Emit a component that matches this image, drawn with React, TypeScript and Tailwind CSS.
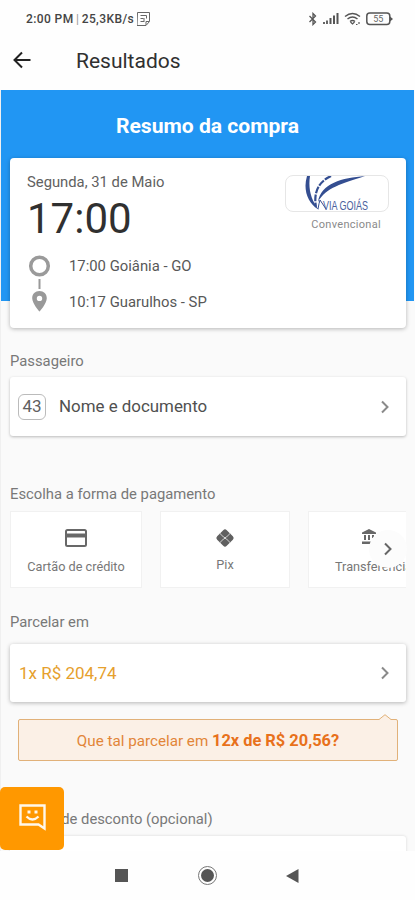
import type { ReactNode } from "react";

function Chevron({ className = "text-[#8a8a8a]" }: { className?: string }) {
  return (
    <svg width="10" height="14" viewBox="0 0 10 14" fill="none" stroke="currentColor" strokeWidth="2" className={className}>
      <path d="M2 1.5 7.5 7 2 12.5" />
    </svg>
  );
}

function StatusBar() {
  return (
    <div className="flex h-[38px] items-center pl-[26px] pr-[22px] text-[#444]">
      <span className="whitespace-nowrap text-[12px] font-medium leading-4 tracking-[0.4px]">
        2:00 PM <span className="-mx-px font-normal text-[#999]">|</span> 25,3KB/s
      </span>
      <svg width="13" height="14" viewBox="0 0 13 14" fill="none" stroke="#666" className="ml-[3px]">
        <path d="M.5.5h12v9l-3.500 4h-9zM3.500 3.500h6v3M3.500 6.500h3M7 6v4M3.500 9.500H7M9 13v-3.500h3" />
      </svg>
      <div className="ml-auto flex items-center">
        <svg width="10" height="14" viewBox="0 0 10 14" fill="none" stroke="#555" strokeWidth="1.300">
          <path d="m1.500 4 6 6L5 12.500v-11L7.500 4l-6 6" />
        </svg>
        <svg width="17" height="12" viewBox="0 0 17 12" className="ml-[4px]">
          <path d="M1 9h2v2H1zM4 7.500h2V11H4z" fill="#666" />
          <path d="M7.500 5h2v6h-2zM11 2.500h2V11h-2zM14.500 0h2v11h-2z" fill="#555" />
        </svg>
        <svg width="17" height="14" viewBox="0 0 17 14" fill="none" stroke="#555" strokeWidth="1.500" className="ml-[5px]">
          <path d="M1 4.500Q8.500-1.500 16 4.500M3.500 7q5-4 10 0M6 9.500q2.500-2 5 0" />
          <path d="m6.500 10 2 2 2-2M12 12.500h1.500M15 12v-2" strokeWidth="1.200" />
        </svg>
        <svg width="27" height="14" viewBox="0 0 27 14" className="ml-[5px]">
          <rect x=".8" y="1" width="23" height="11.500" rx="3" fill="none" stroke="#555" strokeWidth="1.500" />
          <path d="M24 4.500 27 7l-3 2.500Z" fill="#555" />
          <text x="12.300" y="10.200" textAnchor="middle" fontSize="9" fill="#666" fontFamily="Roboto, sans-serif">55</text>
        </svg>
      </div>
    </div>
  );
}

function Label({ className, children }: { className: string; children: ReactNode }) {
  return <div className={`whitespace-nowrap pl-[10px] text-[14.800px] leading-[20px] text-[#787878] ${className}`}>{children}</div>;
}

function Trip() {
  return (
    <section className="ml-[9px] mr-[8px] flex h-[170px] justify-between rounded-[4px] bg-white pl-[17px] pr-[17px] shadow-[0_1px_4px_rgba(0,0,0,0.28)]">
      <div className="whitespace-nowrap">
        <div className="pt-[14px] text-[14.800px] leading-[20px] text-[#616161]">Segunda, 31 de Maio</div>
        <div className="h-[54px] text-[42px] leading-[54px] text-[#303030]">17:00</div>
        <div className="flex">
          <svg width="24" height="62" viewBox="0 0 24 62" className="mt-[7px]">
            <circle cx="12.500" cy="13" r="8.800" fill="none" stroke="#9a9a9a" strokeWidth="3.500" />
            <path d="M12.500 26v10" stroke="#999" strokeWidth="2" />
            <path fillRule="evenodd" d="M12.500 38c-4.300 0-7.300 3.100-7.300 7.200 0 5.300 7.300 13.300 7.300 13.300s7.300-8 7.300-13.300c0-4.100-3-7.200-7.300-7.200Zm0 4.700a2.700 2.700 0 1 1 0 5.400 2.700 2.700 0 0 1 0-5.400Z" fill="#999" />
          </svg>
          <div className="pl-[18px] pt-[10px] text-[14.850px] leading-[20px] text-[#585858]">
            <div>17:00 Goiânia - GO</div>
            <div className="mt-[16px]">10:17 Guarulhos - SP</div>
          </div>
        </div>
      </div>
      <div className="pt-[17px]">
        <div className="flex h-[37px] w-[104px] justify-center rounded-[8px] border border-[#e6e6e6]">
          <svg width="66" height="35" viewBox="0 0 66 35" fill="none" stroke="#344e91" className="shrink-0">
            <path d="M3 0C-1 13 3 27 15 34C7 24 4 13 6 0Z" fill="#344e91" stroke="none" />
            <path d="M27 0Q8 9 12 31" strokeWidth="2.200" strokeDasharray="7 1.300" />
            <path d="M61 0C38 2 17 7 14 26C22 11 38 8 61 0Z" fill="#344e91" stroke="none" />
            <path d="M14 33q1-6 2-9l6 9" strokeWidth="1" />
            <text x="19" y="33.500" textLength="45" lengthAdjust="spacingAndGlyphs" fill="#4a619d" stroke="none" fontSize="12.500" fontFamily="Liberation Sans, sans-serif">VIA GOIÁS</text>
          </svg>
        </div>
        <div className="mt-[5px] pr-[8px] text-right text-[11px] leading-[16px] tracking-[0.300px] text-[#8a8a8a]">Convencional</div>
      </div>
    </section>
  );
}

function Payments() {
  return (
    <div className="relative ml-[10px] w-[396px]">
      <div className="flex h-[77px] gap-[18px] overflow-hidden text-[12.700px] leading-[16px] text-[#777]">
        <div className="flex w-[132px] shrink-0 flex-col items-center border border-[#f1f1f1] bg-white pt-[17px]">
          <svg width="22" height="18" viewBox="0 0 22 18"><rect x="1" y="1" width="20" height="16" rx="1.500" fill="none" stroke="#686868" strokeWidth="2" /><path d="M1 4.500h20v4H1z" fill="#686868" /></svg>
          <span className="mt-[12px] whitespace-nowrap">Cartão de crédito</span>
        </div>
        <div className="flex w-[130px] shrink-0 flex-col items-center border border-[#f1f1f1] bg-white pt-[16px]">
          <svg width="20" height="20" viewBox="0 0 20 20">
            <rect x="3.200" y="3.200" width="13.600" height="13.600" rx="2.500" transform="rotate(45 10 10)" fill="#606060" />
            <path d="m4.500 5 4 4q1.500 1.500 3 0l4-4M4.500 15l4-4q1.500-1.500 3 0l4 4" fill="none" stroke="#d5d5d5" strokeWidth="1" />
          </svg>
          <span className="mt-[9px]">Pix</span>
        </div>
        <div className="flex w-[132px] shrink-0 flex-col border border-[#f1f1f1] bg-white pl-[26px] pt-[16px]">
          <svg width="16" height="18" viewBox="0 0 16 18" fill="#686868" className="ml-[26px]"><path d="M1 6V4.500L8 1l7 3.500V6ZM3 7h2v5H3zM7 7h2v5H7zM11 7h2v3h-2zM1 13.500h9V16H1z" /></svg>
          <span className="mt-[13px] whitespace-nowrap">Transferência</span>
        </div>
      </div>
      <div className="absolute -right-[1px] top-[19px] flex h-[38px] w-[38px] items-center justify-center rounded-full bg-[#fcfcfc]">
        <Chevron className="text-[#666]" />
      </div>
    </div>
  );
}

export default function App() {
  return (
    <div className="flex h-[900px] w-full flex-col overflow-hidden bg-[#fefefe] font-[Roboto,sans-serif]">
      <StatusBar />
      <header className="flex h-[52px] items-center pb-[8px] pl-[13px]">
        <svg width="18" height="18" viewBox="0 0 18 18" fill="none" stroke="#222" strokeWidth="2"><path d="M17.500 9H2M9 1.500 1.500 9 9 16.500" /></svg>
        <h1 className="pl-[45px] pt-px text-[21px] leading-[28px] text-[#303030]">Resultados</h1>
      </header>

      <main className="relative h-[761px] shrink-0 border-l border-[#f0f0f0] bg-[#fafafa]">
        <div className="mr-px h-full overflow-hidden bg-[linear-gradient(#2196f3_211px,#fafafa_211px)]">
          <h2 className="h-[68px] pt-[22px] text-center text-[21.100px] font-bold leading-[28px] text-white">Resumo da compra</h2>
          <Trip />
          <div className="-ml-px">
            <Label className="h-[49px] pt-[23px]">Passageiro</Label>
          </div>
          <section className="ml-[9px] mr-[8px] flex h-[59px] items-center rounded-[3px] bg-white pl-[8px] pr-[16px] shadow-[0_1px_3px_rgba(0,0,0,0.26)]">
            <span className="flex h-[26px] w-[28px] items-center justify-center rounded-[6px] border border-[#bbb] text-[17px] text-[#606060]">43</span>
            <span className="ml-[13px] mr-auto whitespace-nowrap text-[16.900px] text-[#505050]">Nome e documento</span>
            <Chevron />
          </section>
          <div className="-ml-px">
            <Label className="h-[75px] pt-[48px]">Escolha a forma de pagamento</Label>
            <Payments />
            <Label className="h-[56px] pt-[24px]">Parcelar em</Label>
          </div>
          <section className="ml-[9px] mr-[8px] flex h-[58px] items-center justify-between rounded-[3px] bg-white pl-[9px] pr-[16px] shadow-[0_1px_4px_rgba(0,0,0,0.28)]">
            <span className="whitespace-nowrap pt-px text-[17px] text-[#e6a02d]">1x R$ 204,74</span>
            <Chevron />
          </section>
          <div className="relative ml-[17px] mt-[17px] flex h-[42px] w-[380px] items-center justify-center whitespace-nowrap rounded-[2px] border border-[#e1b179] bg-[#fbf0e6] pt-[2px] text-[15.200px] text-[#e28538]">
            <span>Que tal parcelar em <b className="text-[16.400px] text-[#e8711b]">12x de R$ 20,56?</b></span>
            <svg width="12" height="7" viewBox="0 0 12 7" className="absolute -top-[6px] right-[6px]"><path d="M0 5.500 6 .7l6 4.800V7H0Z" fill="#fbf0e6" /><path d="M0 5.500 6 .7l6 4.800" fill="none" stroke="#e1b179" /></svg>
          </div>
          <div className="-ml-px">
            <Label className="h-[75px] pt-[48px]">Cupom de desconto (opcional)</Label>
          </div>
          <div className="ml-[9px] mr-[8px] h-[40px] rounded-[3px] bg-white shadow-[0_0_3px_rgba(0,0,0,0.15)]" />
        </div>
        <button className="absolute -left-px top-[697px] flex h-[63px] w-[64px] items-center justify-center rounded-[5px] bg-[#ff9800] pb-[3px]">
          <svg width="27" height="27" viewBox="0 0 27 27" fill="none" stroke="#fff7ea" strokeWidth="2.400">
            <path d="M1.500 1.500h24v23l-6-4h-18z" />
            <path d="M7.500 12.500q6 6 12 0" />
            <path d="M8.500 6.500h3v3h-3zM15.500 6.500h3v3h-3z" fill="#fff7ea" stroke="none" />
          </svg>
        </button>
      </main>

      <nav className="flex h-[49px] shrink-0 items-center pl-[115px]">
        <span className="h-[13px] w-[13px] bg-[#555]" />
        <span className="ml-[70px] flex h-[19px] w-[19px] items-center justify-center rounded-full border border-[#777]"><span className="h-[13px] w-[13px] rounded-full bg-[#555]" /></span>
        <svg width="13" height="14" viewBox="0 0 13 14" className="ml-[69px]"><path d="M12.500 0v14L0 7Z" fill="#555" /></svg>
      </nav>
    </div>
  );
}
